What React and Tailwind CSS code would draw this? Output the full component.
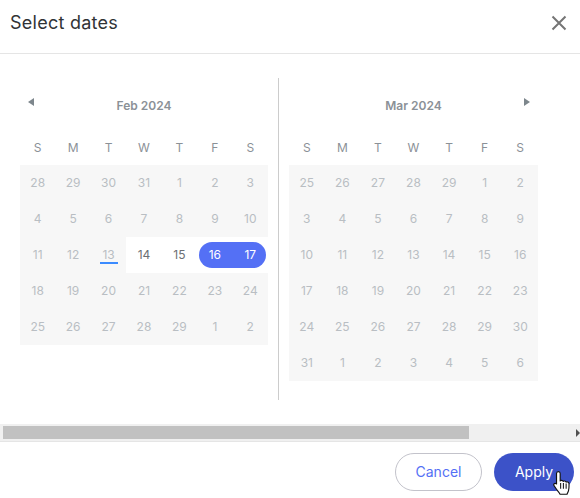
const FEB = [
  [28, 29, 30, 31, 1, 2, 3],
  [4, 5, 6, 7, 8, 9, 10],
  [11, 12, 13, 14, 15, 16, 17],
  [18, 19, 20, 21, 22, 23, 24],
  [25, 26, 27, 28, 29, 1, 2],
];
const MAR = [
  [25, 26, 27, 28, 29, 1, 2],
  [3, 4, 5, 6, 7, 8, 9],
  [10, 11, 12, 13, 14, 15, 16],
  [17, 18, 19, 20, 21, 22, 23],
  [24, 25, 26, 27, 28, 29, 30],
  [31, 1, 2, 3, 4, 5, 6],
];
const WEEK = ["S", "M", "T", "W", "T", "F", "S"];

function Day({ month, row, col, value }) {
  const isFeb = month === "feb" && row === 2;
  if (isFeb && col === 2) {
    return (
      <div className="h-9 flex items-center justify-center relative text-[#b9bec3]">
        {value}
        <span className="absolute left-[9px] bottom-[9px] h-[2px] w-[18px] bg-[#3b8bff]" />
      </div>
    );
  }
  if (isFeb && (col === 3 || col === 4)) {
    return <div className="h-9 flex items-center justify-center bg-white text-[#6b6f73]">{value}</div>;
  }
  if (isFeb && col === 5) {
    return (
      <div className="h-9 bg-white py-[5px] pl-[2px]">
        <div className="h-[26px] flex items-center justify-center rounded-l-[13px] bg-[#5470f5] text-white pr-[2px]">{value}</div>
      </div>
    );
  }
  if (isFeb && col === 6) {
    return (
      <div className="h-9 bg-white py-[5px] pr-[2px]">
        <div className="h-[26px] flex items-center justify-center rounded-r-[13px] bg-[#5470f5] text-white pl-[2px]">{value}</div>
      </div>
    );
  }
  return <div className="h-9 flex items-center justify-center text-[#b9bec3]">{value}</div>;
}

function Calendar({ month, title, weeks, className, arrow }) {
  return (
    <div className={className}>
      <div className="h-[87px] relative">
        <div className="h-[62px] pt-5 flex justify-center text-xs font-semibold leading-4 text-[#8b9197]">{title}</div>
        {arrow}
        <div className="grid grid-cols-7 text-xs leading-4 text-[#8b9197]">
          {WEEK.map((d, i) => (
            <div key={i} className="text-center">{d}</div>
          ))}
        </div>
      </div>
      <div className="grid grid-cols-7 bg-[#f7f7f7] text-xs">
        {weeks.map((week, r) =>
          week.map((value, c) => <Day key={r + "-" + c} month={month} row={r} col={c} value={value} />)
        )}
      </div>
    </div>
  );
}

export default function App() {
  return (
    <div className="w-[580px] h-[498px] flex flex-col bg-white overflow-hidden font-['Inter',sans-serif]">
      <div className="h-[54px] shrink-0 flex items-center justify-between pl-[10px] pr-[13px] pb-[7px] border-b border-[#e5e5e5]">
        <h1 className="text-lg font-normal tracking-[0.25px] text-[#303336]">Select dates</h1>
        <svg width="16" height="16" viewBox="0 0 16 16" fill="none" stroke="#757575" strokeWidth="2">
          <path d="M1.5 1.5l13 13M14.5 1.5l-13 13" />
        </svg>
      </div>

      <div className="h-[370px] shrink-0 pt-6 flex items-start">
        <Calendar
          month="feb"
          title="Feb 2024"
          weeks={FEB}
          className="w-[278px] pl-5 pr-[10px]"
          arrow={
            <svg className="absolute left-[8px] top-[20px]" width="6" height="8" viewBox="0 0 6 8" fill="#7d868c">
              <path d="M6 0v8L0 4z" />
            </svg>
          }
        />
        <div className="w-[1px] h-[322px] bg-[#cccccc] shrink-0" />
        <Calendar
          month="mar"
          title="Mar 2024"
          weeks={MAR}
          className="w-[259px] pl-[10px]"
          arrow={
            <svg className="absolute right-[8px] top-[20px]" width="6" height="8" viewBox="0 0 6 8" fill="#7d868c">
              <path d="M0 0v8l6-4z" />
            </svg>
          }
        />
      </div>

      <div className="h-[18px] shrink-0 flex items-center justify-between pl-[3px] bg-[#f0f0f0] border-b border-[#e5e5e5]">
        <div className="h-[13px] w-[466px] bg-[#c1c1c1]" />
        <svg width="4" height="8" viewBox="0 0 4 8" fill="#505050">
          <path d="M0 0v8l4-4z" />
        </svg>
      </div>

      <div className="flex-1 flex justify-end items-start gap-3 pt-[11px] pr-[6px]">
        <button className="w-[87px] h-[38px] rounded-[19px] border border-[#c3c3cb] bg-white text-sm text-[#5470f5]">Cancel</button>
        <button className="relative w-[80px] h-[38px] rounded-[19px] bg-[#3c52c8] text-sm text-white">
          Apply
          <svg className="absolute left-[59px] top-[18px]" width="17" height="24" viewBox="0.5 1 14.5 21">
            <path
              d="M5 1.500c1 0 1.600.7 1.600 1.700v6.500c.4-.6 2.200-.7 2.600.4.500-.6 2.200-.5 2.600.6.700-.5 2.400-.2 2.500 1.200.1 2.300.1 4.500-.4 6.300-.3 1.200-.9 2-1.300 3.100H6.500c-.6-1.300-1.500-2.300-2.700-3.700L1.200 13.800c-.8-1.100.6-2.700 1.900-1.700l.3.2V3.200C3.400 2.200 4 1.500 5 1.500z"
              fill="#fff"
              stroke="#111"
              strokeWidth="1"
              strokeLinejoin="round"
            />
            <path d="M7 11.500v5M9.400 11.500v5M11.800 12v4.500" stroke="#111" strokeWidth="0.9" fill="none" />
          </svg>
        </button>
      </div>
    </div>
  );
}
